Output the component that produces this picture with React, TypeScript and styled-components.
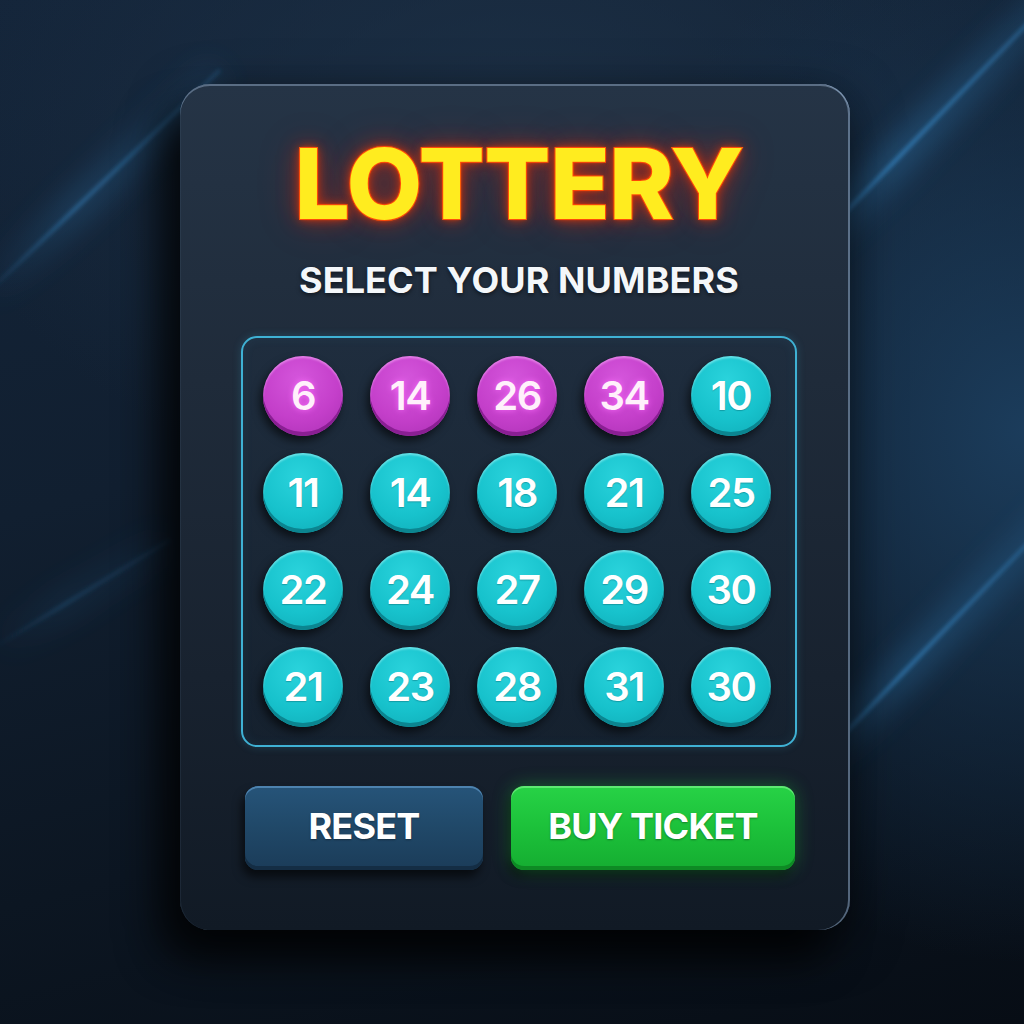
import React from "react";
import styled, { createGlobalStyle } from "styled-components";

const GlobalStyle = createGlobalStyle`
  html, body {
    margin: 0;
    padding: 0;
    background: #0b131d;
  }
  * { box-sizing: border-box; }
`;

const Page = styled.div`
  position: relative;
  width: 1024px;
  height: 1024px;
  overflow: hidden;
  background:
    radial-gradient(ellipse 55% 65% at 100% 42%, rgba(28, 62, 94, 0.95) 0%, rgba(24, 52, 80, 0.5) 45%, rgba(20, 40, 60, 0) 80%),
    radial-gradient(ellipse 75% 50% at 50% 12%, rgba(30, 50, 72, 0.8) 0%, rgba(30, 50, 72, 0) 75%),
    linear-gradient(165deg, #14253a 0%, #111f30 40%, #0c1622 70%, #070d15 100%);
  font-family: Inter, "Noto Sans", sans-serif;
  display: flex;
  align-items: flex-start;
  padding: 84px 0 0 180px;
`;

const Backdrop = styled.svg`
  position: absolute;
  inset: 0;
  width: 1024px;
  height: 1024px;
  pointer-events: none;
`;

const Card = styled.section`
  position: relative;
  width: 670px;
  height: 846px;
  border-radius: 30px;
  background: linear-gradient(180deg, #253446 0%, #1f2b3a 35%, #18222f 70%, #111a25 100%);
  box-shadow:
    inset 0 2px 0 rgba(170, 195, 225, 0.4),
    inset -2px 0 0 rgba(150, 178, 210, 0.5),
    inset 1px 0 0 rgba(90, 115, 140, 0.15),
    -22px 30px 40px rgba(0, 0, 0, 0.7),
    0 14px 50px rgba(0, 0, 0, 0.55);
  display: flex;
  flex-direction: column;
  align-items: center;
  padding: 51px 53px 0 61px;
`;

const Title = styled.h1`
  margin: 0;
  font-family: Inter, "Noto Sans", sans-serif;
  font-weight: 800;
  font-size: 98px;
  line-height: 1;
  letter-spacing: -0.6px;
  color: #ffec1f;
  -webkit-text-stroke: 2px #ff6a10;
  paint-order: stroke fill;
  text-shadow:
    0 0 3px #ff4a0a,
    0 0 10px rgba(255, 60, 0, 0.75),
    0 0 22px rgba(255, 40, 0, 0.45),
    0 0 42px rgba(255, 30, 0, 0.25);
`;

const Subtitle = styled.h2`
  margin: 29px 0 0;
  font-family: Inter, "Noto Sans", sans-serif;
  font-weight: 700;
  font-size: 36px;
  line-height: 1;
  letter-spacing: 0.1px;
  color: #f4f7fa;
  text-shadow: 0 2px 4px rgba(0, 0, 0, 0.5);
`;

const Board = styled.div`
  margin-top: 38px;
  width: 556px;
  height: 411px;
  border: 2px solid #3fb1d4;
  border-radius: 16px;
  background: linear-gradient(180deg, rgba(30, 46, 64, 0.6) 0%, rgba(20, 33, 47, 0.6) 100%);
  box-shadow: 0 0 8px rgba(63, 177, 212, 0.22), inset 0 0 12px rgba(63, 177, 212, 0.08);
  display: grid;
  grid-template-columns: repeat(5, 80px);
  grid-auto-rows: 80px;
  column-gap: 27px;
  row-gap: 17px;
  padding: 18px 24px 18px 20px;
`;

const Ball = styled.button<{ $picked?: boolean }>`
  width: 80px;
  height: 80px;
  border: none;
  border-radius: 50%;
  padding: 0 0 2px;
  cursor: pointer;
  display: flex;
  align-items: center;
  justify-content: center;
  font-family: Inter, "Noto Sans", sans-serif;
  font-weight: 600;
  font-size: 40px;
  letter-spacing: -1.5px;
  color: ${(p) => (p.$picked ? "#fff0fb" : "#ffffff")};
  background: ${(p) =>
    p.$picked
      ? "radial-gradient(circle at 45% 30%, #d556dc 0%, #c43fca 55%, #a92fb2 100%)"
      : "radial-gradient(circle at 45% 30%, #2ad3dc 0%, #17c2cc 55%, #0fa9b4 100%)"};
  box-shadow: ${(p) =>
    p.$picked
      ? "inset 0 -4px 0 #8a1f93, inset 0 2px 2px rgba(255,190,255,0.45), -3px 5px 8px rgba(0,0,0,0.6)"
      : "inset 0 -4px 0 #0b8590, inset 0 2px 2px rgba(190,255,255,0.45), -3px 5px 8px rgba(0,0,0,0.6)"};
  text-shadow: ${(p) =>
    p.$picked ? "0 0 6px rgba(255,110,255,0.85)" : "0 1px 1px rgba(0,80,90,0.35)"};
`;

const Actions = styled.div`
  margin-top: 39px;
  width: 556px;
  display: flex;
  gap: 28px;
  padding: 0 2px 0 4px;
`;

const ActionButton = styled.button<{ $primary?: boolean }>`
  height: 84px;
  width: ${(p) => (p.$primary ? "284px" : "238px")};
  border: none;
  border-radius: 13px;
  cursor: pointer;
  font-family: Inter, "Noto Sans", sans-serif;
  font-weight: 700;
  font-size: 36px;
  letter-spacing: -0.8px;
  color: #ffffff;
  padding: 0 0 4px;
  background: ${(p) =>
    p.$primary
      ? "linear-gradient(180deg, #27d246 0%, #1cc13a 50%, #15ad31 100%)"
      : "linear-gradient(180deg, #265479 0%, #204868 50%, #1b3c59 100%)"};
  box-shadow: ${(p) =>
    p.$primary
      ? "inset 0 2px 0 rgba(150,255,160,0.5), inset 0 -4px 0 #0e8a24, 0 0 18px rgba(40,220,70,0.35), -3px 7px 10px rgba(0,0,0,0.55)"
      : "inset 0 2px 0 rgba(110,170,220,0.55), inset 0 -4px 0 #142d44, -3px 7px 10px rgba(0,0,0,0.6)"};
  text-shadow: 0 1px 2px rgba(0, 0, 0, 0.35);
`;

const picks = [6, 14, 26, 34];
const numbers = [
  6, 14, 26, 34, 10,
  11, 14, 18, 21, 25,
  22, 24, 27, 29, 30,
  21, 23, 28, 31, 30,
];

type Streak = { x1: number; y1: number; x2: number; y2: number; o: number };

const streaks: Streak[] = [
  { x1: 780, y1: 280, x2: 1060, y2: -10, o: 1 },
  { x1: 800, y1: 780, x2: 1060, y2: 510, o: 0.9 },
  { x1: -20, y1: 300, x2: 220, y2: 70, o: 0.7 },
  { x1: -10, y1: 650, x2: 170, y2: 540, o: 0.3 },
];

function LightStreaks() {
  return (
    <Backdrop viewBox="0 0 1024 1024">
      <defs>
        <filter id="soft" x="-30%" y="-30%" width="160%" height="160%">
          <feGaussianBlur stdDeviation="14" />
        </filter>
        <filter id="thin" x="-20%" y="-20%" width="140%" height="140%">
          <feGaussianBlur stdDeviation="2" />
        </filter>
        {streaks.map((s, i) => (
          <linearGradient
            key={i}
            id={`fade${i}`}
            gradientUnits="userSpaceOnUse"
            x1={s.x1}
            y1={s.y1}
            x2={s.x2}
            y2={s.y2}
          >
            <stop offset="0" stopColor="#3a93d6" stopOpacity="0" />
            <stop offset="0.4" stopColor="#3a93d6" stopOpacity={0.85 * s.o} />
            <stop offset="1" stopColor="#3a93d6" stopOpacity={0.4 * s.o} />
          </linearGradient>
        ))}
      </defs>
      {streaks.map((s, i) => (
        <g key={i}>
          <line
            x1={s.x1}
            y1={s.y1}
            x2={s.x2}
            y2={s.y2}
            stroke={`url(#fade${i})`}
            strokeWidth="34"
            opacity="0.35"
            filter="url(#soft)"
          />
          <line
            x1={s.x1}
            y1={s.y1}
            x2={s.x2}
            y2={s.y2}
            stroke={`url(#fade${i})`}
            strokeWidth="3"
            filter="url(#thin)"
          />
        </g>
      ))}
    </Backdrop>
  );
}

export default function App() {
  return (
    <>
      <GlobalStyle />
      <Page>
        <LightStreaks />
        <Card>
          <Title>LOTTERY</Title>
          <Subtitle>SELECT YOUR NUMBERS</Subtitle>
          <Board>
            {numbers.map((n, i) => (
              <Ball key={i} $picked={i < 4 && picks.includes(n)}>
                {n}
              </Ball>
            ))}
          </Board>
          <Actions>
            <ActionButton>RESET</ActionButton>
            <ActionButton $primary>BUY TICKET</ActionButton>
          </Actions>
        </Card>
      </Page>
    </>
  );
}
